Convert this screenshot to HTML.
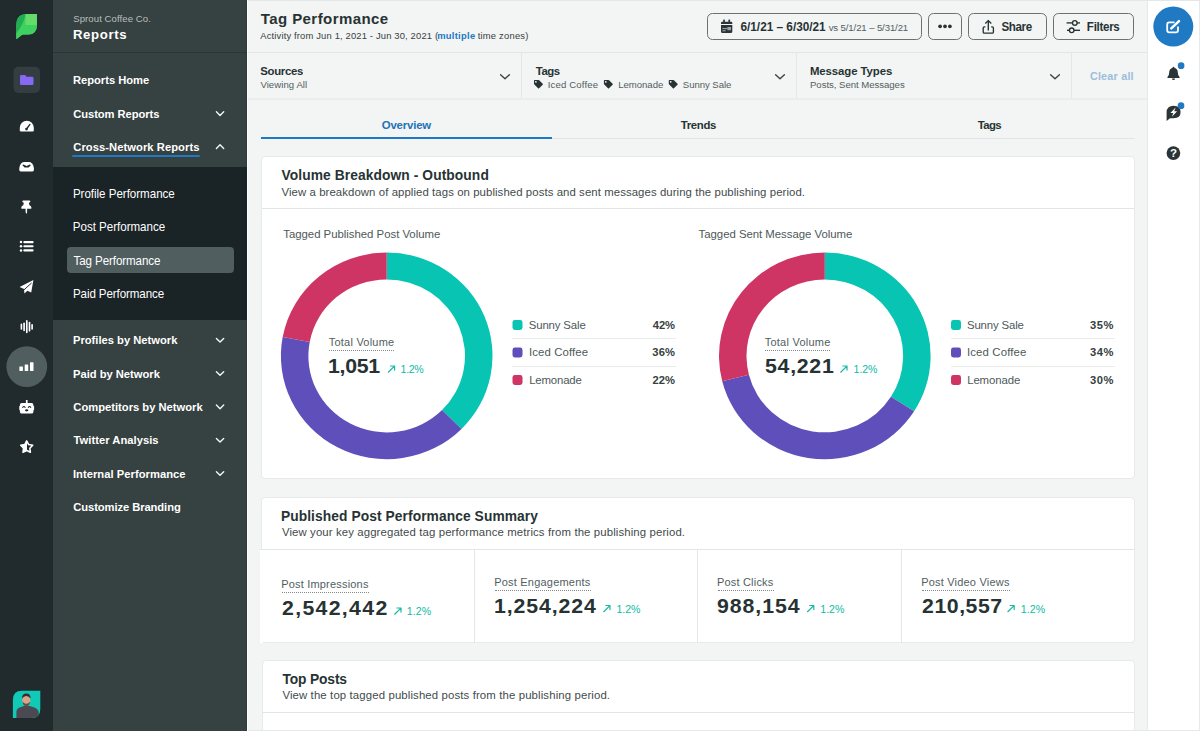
<!DOCTYPE html>
<html lang="en"><head><meta charset="utf-8"><title>Tag Performance - Sprout Reports</title>
<style>
html,body{margin:0;padding:0}
body{width:1200px;height:731px;overflow:hidden;position:relative;background:#f3f4f4;font-family:"Liberation Sans",sans-serif}
.abs,.t{position:absolute}
.t{white-space:pre;line-height:1;font-family:"Liberation Sans",sans-serif}
#iconbar{left:0;top:0;width:53px;height:731px;background:#212a2c}
#sidebar{left:53px;top:0;width:194px;height:731px;background:#364141;border-right:1.5px solid #303a3b;box-sizing:border-box}
#sbhead{left:53px;top:52px;width:194px;height:1px;background:#2c3637}
#submenu{left:53px;top:167px;width:194px;height:153px;background:#1a2325}
#sel{left:66.5px;top:246.5px;width:167px;height:26.5px;border-radius:4px;background:#515e5f}
#cnu{left:72.3px;top:155px;width:128px;height:2px;background:#2079c3;border-radius:1px}
#sbedge{left:247px;top:0;width:1px;height:731px;background:#fcfdfd}
#rail{left:1146.5px;top:0;width:53.5px;height:731px;background:#fff;border-left:1.5px solid #e6e9e9;border-right:1px solid #e6e9e9;box-sizing:border-box}
.hl{height:1px;background:#e2e5e5}
.vl{width:1px;background:#e4e7e7}
.card{background:#fff;border:1px solid #e8eaea;border-radius:4px;box-sizing:border-box}
.btn{top:13px;height:27px;border:1px solid #687273;border-radius:5.5px;box-sizing:border-box;background:#f3f4f4}
.sw{width:10px;height:10px;border-radius:2.5px}
.dot{height:0;border-top:1.3px dotted #7f8b8b}
svg{position:absolute;overflow:visible}

</style></head>
<body>
<div id="iconbar" class="abs"></div>
<div id="sidebar" class="abs"></div>
<div id="sbhead" class="abs"></div>
<div id="submenu" class="abs"></div>
<div id="sel" class="abs"></div>
<div id="cnu" class="abs"></div>
<div id="sbedge" class="abs"></div>
<div id="rail" class="abs"></div>
<!-- top edge line -->
<div class="abs hl" style="left:248px;top:0;width:952px;background:#e4e7e7"></div>
<div class="abs hl" style="left:248px;top:730px;width:952px;background:#e6e9e9;z-index:5"></div>
<!-- header / filter lines -->
<div class="abs hl" style="left:248px;top:52px;width:899px"></div>
<div class="abs hl" style="left:248px;top:98px;width:899px;height:2px;background:#eaeded"></div>
<div class="abs vl" style="left:521px;top:53px;height:45px"></div>
<div class="abs vl" style="left:796px;top:53px;height:45px"></div>
<div class="abs vl" style="left:1071px;top:53px;height:45px"></div>
<!-- tabs -->
<div class="abs hl" style="left:262px;top:138px;width:873px"></div>
<div class="abs" style="left:261px;top:137px;width:291px;height:2px;background:#2079c3"></div>
<!-- buttons -->
<div class="abs btn" style="left:707px;width:215px"></div>
<div class="abs btn" style="left:928px;width:34px"></div>
<div class="abs btn" style="left:968px;width:78.5px"></div>
<div class="abs btn" style="left:1053px;width:80.5px"></div>
<!-- cards -->
<div class="abs card" style="left:261px;top:156px;width:874px;height:323px"></div>
<div class="abs hl" style="left:262px;top:208px;width:872px"></div>
<div class="abs card" style="left:261px;top:496.5px;width:874px;height:146px"></div>
<div class="abs" style="left:260px;top:549px;width:3px;height:93.5px;background:#fff"></div>
<div class="abs hl" style="left:260px;top:548.5px;width:874px"></div>
<div class="abs vl" style="left:474px;top:549px;height:93px"></div>
<div class="abs vl" style="left:696.5px;top:549px;height:93px"></div>
<div class="abs vl" style="left:900.5px;top:549px;height:93px"></div>
<div class="abs card" style="left:261.5px;top:659.5px;width:873.5px;height:90px"></div>
<div class="abs hl" style="left:262px;top:712px;width:872px"></div>
<!-- dotted underlines -->
<div class="abs dot" style="left:329px;top:349.5px;width:65px"></div>
<div class="abs dot" style="left:765px;top:349.5px;width:65px"></div>
<div class="abs dot" style="left:282px;top:591.5px;width:87px"></div>
<div class="abs dot" style="left:495px;top:589.5px;width:96px"></div>
<div class="abs dot" style="left:717.5px;top:589.5px;width:56px"></div>
<div class="abs dot" style="left:922px;top:589.5px;width:88px"></div>
<!-- legends -->
<div class="abs hl" style="left:512px;top:338px;width:164px;background:#ebeded"></div>
<div class="abs hl" style="left:512px;top:365.5px;width:164px;background:#ebeded"></div>
<div class="abs hl" style="left:950.5px;top:338px;width:164px;background:#ebeded"></div>
<div class="abs hl" style="left:950.5px;top:365.5px;width:164px;background:#ebeded"></div>
<svg width="1200" height="731" viewBox="0 0 1200 731" style="left:0;top:0"><g transform="translate(386.7 355.9) scale(1 0.9765)">
<path d="M0.00 -105.80 A105.8 105.8 0 0 1 74.81 74.81 L55.37 55.37 A78.3 78.3 0 0 0 0.00 -78.30 Z" fill="#08c4b2"/>
<path d="M74.81 74.81 A105.8 105.8 0 0 1 -104.03 -19.28 L-76.99 -14.27 A78.3 78.3 0 0 0 55.37 55.37 Z" fill="#5f4fba"/>
<path d="M-104.03 -19.28 A105.8 105.8 0 0 1 -0.00 -105.80 L-0.00 -78.30 A78.3 78.3 0 0 0 -76.99 -14.27 Z" fill="#cf3564"/>
</g></svg>
<svg width="1200" height="731" viewBox="0 0 1200 731" style="left:0;top:0"><g transform="translate(824.8 355.9) scale(1 0.9765)">
<path d="M0.00 -105.80 A105.8 105.8 0 0 1 89.33 56.69 L66.11 41.96 A78.3 78.3 0 0 0 0.00 -78.30 Z" fill="#08c4b2"/>
<path d="M89.33 56.69 A105.8 105.8 0 0 1 -102.57 25.95 L-75.91 19.21 A78.3 78.3 0 0 0 66.11 41.96 Z" fill="#5f4fba"/>
<path d="M-102.57 25.95 A105.8 105.8 0 0 1 -0.00 -105.80 L-0.00 -78.30 A78.3 78.3 0 0 0 -75.91 19.21 Z" fill="#cf3564"/>
</g></svg>
<svg width="1200" height="731" viewBox="0 0 1200 731" style="left:0;top:0">
<defs>
<clipPath id="leafclip"><path d="M36.9 14 L27.3 14 Q16.3 14 16.3 25 L16.3 39.2 L22.6 34.6 L28.2 34.6 Q36.9 34.6 36.9 25.6 Z"/></clipPath>
<clipPath id="avclip"><path d="M21.9 690.7 H40.3 V709 Q40.3 718 31.3 718 H12.9 V699.7 Q12.9 690.7 21.9 690.7 Z"/></clipPath>
</defs>
<!-- logo -->
<g clip-path="url(#leafclip)">
<rect x="16" y="13" width="22" height="27" fill="#3fd15f"/>
<path d="M16 13 H26 Q24 24 16.3 33 Z" fill="#22ad52"/>
<path d="M25.5 13 H38 V25 H25.5 Z" fill="#63dc6c"/>
<path d="M16 40 L16 33 Q22 29 25.5 25 H38 V35 H22 Z" fill="#3fd15f"/>
</g>
<!-- folder tile -->
<rect x="13.5" y="66.8" width="26.5" height="26.2" rx="5" fill="#343e40"/>
<path d="M20 76.4 Q20 75 21.4 75 H24.6 Q25.3 75 25.7 75.6 L26.5 76.7 H32.1 Q33.5 76.7 33.5 78.1 V83.7 Q33.5 85.1 32.1 85.1 H21.4 Q20 85.1 20 83.7 Z" fill="#8668f4"/>
<!-- gauge -->
<path d="M19.8 130.3 V127.8 A7 7.1 0 0 1 33.8 127.8 V130.3 Q33.8 131.5 32.6 131.5 H21 Q19.8 131.5 19.8 130.3 Z" fill="#fff"/>
<path d="M26.6 129 L29.9 124.4" stroke="#212a2c" stroke-width="1.3" stroke-linecap="round"/>
<circle cx="26.5" cy="129.1" r="1.35" fill="#212a2c"/>
<!-- inbox -->
<path d="M19.3 167.9 Q20.3 162 24.6 162 H28.6 Q32.9 162 33.9 167.9 V170 Q33.9 171.4 32.5 171.4 H20.7 Q19.3 171.4 19.3 170 Z" fill="#fff"/>
<path d="M22.4 165.2 Q23 164.4 23.9 164.7 L26.6 166 L29.3 164.7 Q30.2 164.4 30.8 165.2 L28.6 167.6 H24.6 Z" fill="#212a2c"/>
<!-- pin -->
<path d="M23.2 200.4 H29.5 Q30.3 200.4 30.3 201.2 V201.7 Q30.3 202.5 29.5 202.5 H28.9 L29.3 204.9 Q31.5 206 31.5 208.1 Q31.5 208.8 30.8 208.8 H27.1 V212.2 L26.35 213.9 L25.6 212.2 V208.8 H21.9 Q21.2 208.8 21.2 208.1 Q21.2 206 23.4 204.9 L23.8 202.5 H23.2 Q22.4 202.5 22.4 201.7 V201.2 Q22.4 200.4 23.2 200.4 Z" fill="#fff"/>
<!-- list -->
<g fill="#fff">
<circle cx="21" cy="242.1" r="1.25"/><rect x="23.3" y="241" width="10.3" height="2.2" rx="1"/>
<circle cx="21" cy="246.25" r="1.25"/><rect x="23.3" y="245.15" width="10.3" height="2.2" rx="1"/>
<circle cx="21" cy="250.4" r="1.25"/><rect x="23.3" y="249.3" width="10.3" height="2.2" rx="1"/>
</g>
<!-- plane -->
<path d="M33.4 280 L19.6 286.9 L24 289.1 L24.4 293.5 L27.4 290.7 L31.2 292.4 Z" fill="#fff"/>
<path d="M24.3 289.6 L31.3 283.2" stroke="#212a2c" stroke-width="1" stroke-linecap="round"/>
<!-- wave -->
<g stroke="#fff" stroke-width="1.65" stroke-linecap="round">
<path d="M21.4 324.4 V328.9"/><path d="M24.1 323.2 V330.4"/><path d="M26.8 320.8 V332.5"/><path d="M29.5 322.6 V330.8"/><path d="M32.1 324.8 V328.9"/>
</g>
<!-- active circle + bars -->
<ellipse cx="26.8" cy="366.6" rx="20.4" ry="20.4" fill="#515e5f"/>
<g fill="#fff"><rect x="19.4" y="366.6" width="3.5" height="4.4" rx=".5"/><rect x="24.7" y="364.6" width="3.5" height="6.4" rx=".5"/><rect x="30" y="362.2" width="3.5" height="8.8" rx=".5"/></g>
<!-- bot -->
<g fill="#fff"><rect x="25.9" y="400" width="1.7" height="3.6"/><rect x="19.9" y="403" width="13.5" height="10.6" rx="1.9"/><rect x="19.3" y="406" width="1.4" height="4.2" rx=".6"/><rect x="32.7" y="406" width="1.4" height="4.2" rx=".6"/></g>
<g stroke="#212a2c" stroke-width="1.05" fill="none" stroke-linecap="round"><path d="M22.7 407.4 Q23.9 405.8 25.1 407.4"/><path d="M28.3 407.4 Q29.5 405.8 30.7 407.4"/></g>
<ellipse cx="26.7" cy="410.3" rx="1.7" ry="1.1" fill="#212a2c"/>
<!-- star -->
<clipPath id="starL"><rect x="18" y="438" width="8.9" height="17"/></clipPath>
<path d="M26.70 440.90 L28.64 444.53 L32.69 445.25 L29.84 448.22 L30.40 452.30 L26.70 450.50 L23.00 452.30 L23.56 448.22 L20.71 445.25 L24.76 444.53 Z" fill="#212a2c" stroke="#fff" stroke-width="1.55" stroke-linejoin="round"/>
<path d="M26.70 440.90 L28.64 444.53 L32.69 445.25 L29.84 448.22 L30.40 452.30 L26.70 450.50 L23.00 452.30 L23.56 448.22 L20.71 445.25 L24.76 444.53 Z" fill="#fff" clip-path="url(#starL)"/>
<!-- avatar -->
<g clip-path="url(#avclip)">
<rect x="12" y="690" width="29" height="29" fill="#10c9b6"/>
<path d="M16.4 718.5 V712 Q16.4 708 21 707 L24.5 705.8 H28.5 L33 707 Q38.6 708.5 38.8 713 V718.5 Z" fill="#4b4a52"/>
<ellipse cx="26.3" cy="700.2" rx="4.1" ry="5.2" fill="#d7a48d"/>
<path d="M22 698.5 Q22 693.4 26.3 693.4 Q30.6 693.4 30.6 698.5 Q29 696 26.3 696 Q23.6 696 22 698.5 Z" fill="#3a2c28"/>
<path d="M22.5 701.5 Q23 706 26.3 706 Q29.6 706 30.1 701.5 Q28.5 703.8 26.3 703.8 Q24.1 703.8 22.5 701.5 Z" fill="#6b4a40"/>
</g>
<!-- compose -->
<circle cx="1173.3" cy="26.6" r="20" fill="#2079c3"/>
<path d="M1174.6 22.3 H1169.3 Q1167.2 22.3 1167.2 24.4 V30.3 Q1167.2 32.4 1169.3 32.4 H1175.9 Q1178 32.4 1178 30.3 V26.6" stroke="#fff" stroke-width="1.8" fill="none"/>
<path d="M1171.3 28.4 L1179 21.2" stroke="#fff" stroke-width="2.5" stroke-linecap="round"/>
<!-- bell -->
<path d="M1173.5 66.8 Q1174.4 66.8 1174.4 67.8 Q1177.8 68.7 1177.8 72.6 Q1177.8 75.6 1179.5 77 Q1180 77.6 1179.3 78 H1167.7 Q1167 77.6 1167.5 77 Q1169.2 75.6 1169.2 72.6 Q1169.2 68.7 1172.6 67.8 Q1172.6 66.8 1173.5 66.8 Z" fill="#2b3436"/>
<path d="M1171.9 78.6 H1175.1 Q1175.1 80.1 1173.5 80.1 Q1171.9 80.1 1171.9 78.6 Z" fill="#2b3436"/>
<circle cx="1181.1" cy="65.7" r="3.35" fill="#2079c3"/>
<!-- chat bolt -->
<path d="M1166.6 121 V112.5 Q1166.6 105.8 1173.6 105.8 Q1180.6 105.8 1180.6 112 Q1180.6 118.2 1173.6 118.2 H1170 Z" fill="#2b3436"/>
<path d="M1175.6 107.6 L1170.4 112.9 H1173.3 L1171.9 116.8 L1177.1 111.3 H1174.2 Z" fill="#fff"/>
<circle cx="1181" cy="105.7" r="3.35" fill="#2079c3"/>
<!-- help -->
<circle cx="1173.4" cy="153.05" r="6.85" fill="#2b3436"/>
<text x="1173.45" y="157.1" text-anchor="middle" font-family="Liberation Sans, sans-serif" font-size="11.5" font-weight="700" fill="#fff">?</text>
<!-- calendar -->
<g fill="#2b3436"><rect x="723.2" y="19.6" width="1.7" height="3"/><rect x="728.4" y="19.6" width="1.7" height="3"/><path d="M721 22.8 Q721 21.7 722.1 21.7 H731.2 Q732.3 21.7 732.3 22.8 V24 H721 Z"/><path d="M721 25.1 H732.3 V31.8 Q732.3 32.9 731.2 32.9 H722.1 Q721 32.9 721 31.8 Z"/></g>
<g fill="#9aa4a4"><rect x="722.4" y="28" width="5" height="1.1"/><rect x="722.4" y="30.2" width="3.2" height="1.1"/><rect x="727.4" y="27" width="3.6" height="3.2"/></g>
<!-- dots -->
<g fill="#273333"><circle cx="940.1" cy="26.3" r="1.85"/><circle cx="945" cy="26.3" r="1.85"/><circle cx="949.9" cy="26.3" r="1.85"/></g>
<!-- share -->
<g stroke="#273333" stroke-width="1.35" fill="none"><path d="M985.4 26.9 H984.4 Q983.2 26.9 983.2 28.1 V31.9 Q983.2 33.1 984.4 33.1 H992.2 Q993.4 33.1 993.4 31.9 V28.1 Q993.4 26.9 992.2 26.9 H991.2"/><path d="M988.3 30.6 V20.8"/><path d="M985.3 23.6 L988.3 20.6 L991.3 23.6"/></g>
<!-- filters -->
<g stroke="#273333" stroke-width="1.35" fill="#f3f4f4"><path d="M1066.6 22.9 H1080"/><circle cx="1074.8" cy="22.9" r="2.3"/><path d="M1067 30.3 H1080"/><circle cx="1071.7" cy="30.3" r="2.3"/></g>
<!-- chevrons main -->
<g stroke="#364141" stroke-width="1.35" fill="none" stroke-linecap="round" stroke-linejoin="round">
<path d="M500.6 74.7 L505 78.8 L509.4 74.7"/><path d="M775.6 74.7 L780 78.8 L784.4 74.7"/><path d="M1050.6 74.7 L1055 78.8 L1059.4 74.7"/>
</g>
<!-- chevrons sidebar -->
<g stroke="#f4f6f6" stroke-width="1.4" fill="none" stroke-linecap="round" stroke-linejoin="round">
<path d="M216.4 111.8 L220.05 115.4 L223.7 111.8"/>
<path d="M216.4 148.4 L220.05 144.8 L223.7 148.4"/>
<path d="M216.4 338.4 L220.05 342.0 L223.7 338.4"/>
<path d="M216.4 371.7 L220.05 375.3 L223.7 371.7"/>
<path d="M216.4 405.1 L220.05 408.7 L223.7 405.1"/>
<path d="M216.4 438.4 L220.05 442.0 L223.7 438.4"/>
<path d="M216.4 471.7 L220.05 475.3 L223.7 471.7"/>
</g>
<!-- tag icons -->
<g fill="#273333" id="tags">
<path id="tg" d="M534 80.6 Q534 79.9 534.7 79.9 H538.3 Q538.8 79.9 539.2 80.3 L542.7 83.7 Q543.2 84.2 542.7 84.7 L539.1 88.2 Q538.6 88.7 538.1 88.2 L534.4 84.6 Q534 84.2 534 83.7 Z M535.9 80.9 A.9 .9 0 1 0 535.9 82.7 A.9 .9 0 1 0 535.9 80.9 Z" fill-rule="evenodd"/>
<use href="#tg" x="69.9"/><use href="#tg" x="134.8"/>
</g>
<!-- legend swatches -->
<rect x="512.5" y="320" width="10" height="9.9" rx="2.4" fill="#08c4b2"/><rect x="512.5" y="347.5" width="10" height="9.9" rx="2.4" fill="#5f4fba"/><rect x="512.5" y="375" width="10" height="9.9" rx="2.4" fill="#cf3564"/><rect x="951" y="320" width="10" height="9.9" rx="2.4" fill="#08c4b2"/><rect x="951" y="347.5" width="10" height="9.9" rx="2.4" fill="#5f4fba"/><rect x="951" y="375" width="10" height="9.9" rx="2.4" fill="#cf3564"/>
<!-- up-right arrows -->
<g stroke="#14b99f" stroke-width="1.2" fill="none" stroke-linecap="round" stroke-linejoin="round">
<path id="ar" d="M388.3 372.2 L394.5 366.1 M390.5 366 H394.6 V370.1"/>
<use href="#ar" x="452.4"/>
<use href="#ar" x="6.4" y="242"/>
<use href="#ar" x="215.4" y="239.5"/>
<use href="#ar" x="419.2" y="239.5"/>
<use href="#ar" x="619.6" y="239.5"/>
</g>
</svg>


<div id="labels">
<span class="t" style="left:73.20px;top:14.00px;font-size:9.6px;font-weight:400;color:#b7bfbf;letter-spacing:0.068px">Sprout Coffee Co.</span>
<span class="t" style="left:72.97px;top:28.00px;font-size:13.2px;font-weight:700;color:#ffffff;letter-spacing:0.631px">Reports</span>
<span class="t" style="left:72.96px;top:75.00px;font-size:11.2px;font-weight:700;color:#ffffff;letter-spacing:-0.013px;transform:scale(1.000,1.030);transform-origin:0 9.00px">Reports Home</span>
<span class="t" style="left:73.24px;top:109.00px;font-size:11.2px;font-weight:700;color:#ffffff;letter-spacing:-0.068px;transform:scale(1.000,1.030);transform-origin:0 9.00px">Custom Reports</span>
<span class="t" style="left:73.30px;top:142.00px;font-size:11.2px;font-weight:700;color:#ffffff;letter-spacing:0.058px;transform:scale(1.000,1.030);transform-origin:0 9.00px">Cross-Network Reports</span>
<span class="t" style="left:72.88px;top:188.00px;font-size:11.6px;font-weight:400;color:#ffffff;letter-spacing:-0.030px;transform:scale(1.000,1.030);transform-origin:0 10.00px">Profile Performance</span>
<span class="t" style="left:72.87px;top:221.00px;font-size:11.6px;font-weight:400;color:#ffffff;letter-spacing:-0.034px;transform:scale(1.000,1.030);transform-origin:0 10.00px">Post Performance</span>
<span class="t" style="left:73.55px;top:255.00px;font-size:11.6px;font-weight:400;color:#ffffff;letter-spacing:-0.099px;transform:scale(1.000,1.030);transform-origin:0 10.00px">Tag Performance</span>
<span class="t" style="left:72.93px;top:288.00px;font-size:11.6px;font-weight:400;color:#ffffff;letter-spacing:-0.101px;transform:scale(1.000,1.030);transform-origin:0 10.00px">Paid Performance</span>
<span class="t" style="left:72.98px;top:335.00px;font-size:11.2px;font-weight:700;color:#ffffff;letter-spacing:-0.003px;transform:scale(1.000,1.030);transform-origin:0 9.00px">Profiles by Network</span>
<span class="t" style="left:72.99px;top:369.00px;font-size:11.2px;font-weight:700;color:#ffffff;letter-spacing:-0.011px;transform:scale(1.000,1.030);transform-origin:0 9.00px">Paid by Network</span>
<span class="t" style="left:73.33px;top:402.00px;font-size:11.2px;font-weight:700;color:#ffffff;letter-spacing:0.001px;transform:scale(1.000,1.030);transform-origin:0 9.00px">Competitors by Network</span>
<span class="t" style="left:73.53px;top:435.00px;font-size:11.2px;font-weight:700;color:#ffffff;letter-spacing:0.034px;transform:scale(1.000,1.030);transform-origin:0 9.00px">Twitter Analysis</span>
<span class="t" style="left:72.98px;top:469.00px;font-size:11.2px;font-weight:700;color:#ffffff;letter-spacing:0.032px;transform:scale(1.000,1.030);transform-origin:0 9.00px">Internal Performance</span>
<span class="t" style="left:73.29px;top:502.00px;font-size:11.2px;font-weight:700;color:#ffffff;letter-spacing:-0.078px;transform:scale(1.000,1.030);transform-origin:0 9.00px">Customize Branding</span>
<span class="t" style="left:260.67px;top:11.00px;font-size:15px;font-weight:700;color:#273333;letter-spacing:0.438px">Tag Performance</span>
<span class="t" style="left:260.28px;top:31.00px;font-size:9.4px;font-weight:400;color:#364141;letter-spacing:0.167px;transform:scale(1.000,1.030);transform-origin:0 8.00px">Activity from Jun 1, 2021 - Jun 30, 2021 (</span>
<span class="t" style="left:437.13px;top:31.00px;font-size:9.4px;font-weight:700;color:#2079c3;letter-spacing:0.300px;transform:scale(1.000,1.030);transform-origin:0 8.00px">multiple</span>
<span class="t" style="left:477.70px;top:31.00px;font-size:9.4px;font-weight:400;color:#364141;letter-spacing:0.223px;transform:scale(1.000,1.030);transform-origin:0 8.00px">time zones)</span>
<span class="t" style="left:740.49px;top:22.00px;font-size:11.8px;font-weight:700;color:#273333;letter-spacing:-0.005px;transform:scale(1.000,1.030);transform-origin:0 9.00px">6/1/21 – 6/30/21</span>
<span class="t" style="left:828.69px;top:23.00px;font-size:9.6px;font-weight:400;color:#515e5f;letter-spacing:-0.116px;transform:scale(1.000,1.030);transform-origin:0 8.00px">vs 5/1/21 – 5/31/21</span>
<span class="t" style="left:1001.46px;top:21.00px;font-size:11.6px;font-weight:700;color:#273333;letter-spacing:-0.369px;transform:scale(1.000,1.030);transform-origin:0 10.00px">Share</span>
<span class="t" style="left:1086.87px;top:21.00px;font-size:11.6px;font-weight:700;color:#273333;letter-spacing:-0.310px;transform:scale(1.000,1.030);transform-origin:0 10.00px">Filters</span>
<span class="t" style="left:260.30px;top:66.00px;font-size:11.4px;font-weight:700;color:#273333;letter-spacing:-0.324px;transform:scale(1.000,1.030);transform-origin:0 9.00px">Sources</span>
<span class="t" style="left:260.42px;top:80.00px;font-size:9.6px;font-weight:400;color:#515e5f;letter-spacing:0.055px;transform:scale(1.000,1.030);transform-origin:0 8.00px">Viewing All</span>
<span class="t" style="left:535.82px;top:66.00px;font-size:11.4px;font-weight:700;color:#273333;letter-spacing:-0.490px;transform:scale(1.000,1.030);transform-origin:0 9.00px">Tags</span>
<span class="t" style="left:547.73px;top:80.00px;font-size:9.6px;font-weight:400;color:#515e5f;letter-spacing:0.152px;transform:scale(1.000,1.030);transform-origin:0 8.00px">Iced Coffee</span>
<span class="t" style="left:618.19px;top:80.00px;font-size:9.6px;font-weight:400;color:#515e5f;letter-spacing:-0.031px;transform:scale(1.000,1.030);transform-origin:0 8.00px">Lemonade</span>
<span class="t" style="left:682.85px;top:80.00px;font-size:9.6px;font-weight:400;color:#515e5f;letter-spacing:-0.060px;transform:scale(1.000,1.030);transform-origin:0 8.00px">Sunny Sale</span>
<span class="t" style="left:809.89px;top:66.00px;font-size:11.4px;font-weight:700;color:#273333;letter-spacing:-0.078px;transform:scale(1.000,1.030);transform-origin:0 9.00px">Message Types</span>
<span class="t" style="left:810.01px;top:80.00px;font-size:9.6px;font-weight:400;color:#515e5f;letter-spacing:-0.040px;transform:scale(1.000,1.030);transform-origin:0 8.00px">Posts, Sent Messages</span>
<span class="t" style="left:1089.89px;top:71.00px;font-size:10.8px;font-weight:700;color:#9bbedd;letter-spacing:0.217px;transform:scale(1.000,1.030);transform-origin:0 9.00px">Clear all</span>
<span class="t" style="left:381.74px;top:120.00px;font-size:11.4px;font-weight:700;color:#2173b8;letter-spacing:-0.175px;transform:scale(1.000,1.030);transform-origin:0 9.00px">Overview</span>
<span class="t" style="left:680.67px;top:120.00px;font-size:11.4px;font-weight:700;color:#273333;letter-spacing:-0.317px;transform:scale(1.000,1.030);transform-origin:0 9.00px">Trends</span>
<span class="t" style="left:977.71px;top:120.00px;font-size:11.4px;font-weight:700;color:#273333;letter-spacing:-0.603px;transform:scale(1.000,1.030);transform-origin:0 9.00px">Tags</span>
<span class="t" style="left:281.53px;top:169.00px;font-size:13.8px;font-weight:700;color:#273333;letter-spacing:0.082px;transform:scale(1.000,1.030);transform-origin:0 11.00px">Volume Breakdown - Outbound</span>
<span class="t" style="left:281.52px;top:187.00px;font-size:11.4px;font-weight:400;color:#3f4b4c;letter-spacing:0.071px;transform:scale(1.000,1.030);transform-origin:0 9.00px">View a breakdown of applied tags on published posts and sent messages during the publishing period.</span>
<span class="t" style="left:283.24px;top:229.00px;font-size:11.4px;font-weight:400;color:#4d595a;letter-spacing:-0.023px;transform:scale(1.000,1.030);transform-origin:0 9.00px">Tagged Published Post Volume</span>
<span class="t" style="left:698.62px;top:229.00px;font-size:11.4px;font-weight:400;color:#4d595a;letter-spacing:-0.034px;transform:scale(1.000,1.030);transform-origin:0 9.00px">Tagged Sent Message Volume</span>
<span class="t" style="left:328.77px;top:337.00px;font-size:11.0px;font-weight:400;color:#515e5f;letter-spacing:0.220px;transform:scale(1.000,1.030);transform-origin:0 9.00px">Total Volume</span>
<span class="t" style="left:327.80px;top:358.00px;font-size:18.2px;font-weight:700;color:#273333;letter-spacing:-0.234px;transform:scale(1.170,1.070);transform-origin:0 15.00px">1,051</span>
<span class="t" style="left:400.59px;top:364.00px;font-size:10.6px;font-weight:400;color:#0cbba5;letter-spacing:-0.314px;transform:scale(1.000,1.030);transform-origin:0 9.00px">1.2%</span>
<span class="t" style="left:764.65px;top:337.00px;font-size:11.0px;font-weight:400;color:#515e5f;letter-spacing:0.245px;transform:scale(1.000,1.030);transform-origin:0 9.00px">Total Volume</span>
<span class="t" style="left:764.56px;top:358.00px;font-size:18.2px;font-weight:700;color:#273333;letter-spacing:0.624px;transform:scale(1.170,1.070);transform-origin:0 15.00px">54,221</span>
<span class="t" style="left:853.59px;top:364.00px;font-size:10.6px;font-weight:400;color:#0cbba5;letter-spacing:-0.081px;transform:scale(1.000,1.030);transform-origin:0 9.00px">1.2%</span>
<span class="t" style="left:528.79px;top:320.00px;font-size:11.4px;font-weight:400;color:#4d595a;letter-spacing:-0.146px;transform:scale(1.000,1.030);transform-origin:0 9.00px">Sunny Sale</span>
<span class="t" style="left:652.66px;top:320.00px;font-size:11.2px;font-weight:700;color:#364141;letter-spacing:0.002px;transform:scale(1.000,1.030);transform-origin:0 9.00px">42%</span>
<span class="t" style="left:528.96px;top:347.00px;font-size:11.4px;font-weight:400;color:#4d595a;letter-spacing:0.099px;transform:scale(1.000,1.030);transform-origin:0 9.00px">Iced Coffee</span>
<span class="t" style="left:652.25px;top:347.00px;font-size:11.2px;font-weight:700;color:#364141;letter-spacing:0.209px;transform:scale(1.000,1.030);transform-origin:0 9.00px">36%</span>
<span class="t" style="left:529.20px;top:375.00px;font-size:11.4px;font-weight:400;color:#4d595a;letter-spacing:-0.166px;transform:scale(1.000,1.030);transform-origin:0 9.00px">Lemonade</span>
<span class="t" style="left:652.45px;top:375.00px;font-size:11.2px;font-weight:700;color:#364141;letter-spacing:0.107px;transform:scale(1.000,1.030);transform-origin:0 9.00px">22%</span>
<span class="t" style="left:966.96px;top:320.00px;font-size:11.4px;font-weight:400;color:#4d595a;letter-spacing:-0.152px;transform:scale(1.000,1.030);transform-origin:0 9.00px">Sunny Sale</span>
<span class="t" style="left:1090.11px;top:320.00px;font-size:11.2px;font-weight:700;color:#364141;letter-spacing:0.500px;transform:scale(1.000,1.030);transform-origin:0 9.00px">35%</span>
<span class="t" style="left:966.92px;top:347.00px;font-size:11.4px;font-weight:400;color:#4d595a;letter-spacing:0.144px;transform:scale(1.000,1.030);transform-origin:0 9.00px">Iced Coffee</span>
<span class="t" style="left:1090.11px;top:347.00px;font-size:11.2px;font-weight:700;color:#364141;letter-spacing:0.500px;transform:scale(1.000,1.030);transform-origin:0 9.00px">34%</span>
<span class="t" style="left:967.17px;top:375.00px;font-size:11.4px;font-weight:400;color:#4d595a;letter-spacing:-0.107px;transform:scale(1.000,1.030);transform-origin:0 9.00px">Lemonade</span>
<span class="t" style="left:1090.11px;top:375.00px;font-size:11.2px;font-weight:700;color:#364141;letter-spacing:0.500px;transform:scale(1.000,1.030);transform-origin:0 9.00px">30%</span>
<span class="t" style="left:280.95px;top:510.00px;font-size:13.8px;font-weight:700;color:#273333;letter-spacing:0.074px;transform:scale(1.000,1.030);transform-origin:0 11.00px">Published Post Performance Summary</span>
<span class="t" style="left:281.89px;top:527.00px;font-size:11.4px;font-weight:400;color:#3f4b4c;letter-spacing:0.110px;transform:scale(1.000,1.030);transform-origin:0 9.00px">View your key aggregated tag performance metrics from the publishing period.</span>
<span class="t" style="left:281.18px;top:579.00px;font-size:11.0px;font-weight:400;color:#515e5f;letter-spacing:0.190px;transform:scale(1.000,1.030);transform-origin:0 9.00px">Post Impressions</span>
<span class="t" style="left:281.96px;top:600.00px;font-size:18.2px;font-weight:700;color:#273333;letter-spacing:1.129px;transform:scale(1.170,1.070);transform-origin:0 15.00px">2,542,442</span>
<span class="t" style="left:406.75px;top:606.00px;font-size:10.6px;font-weight:400;color:#0cbba5;letter-spacing:0.125px;transform:scale(1.000,1.030);transform-origin:0 9.00px">1.2%</span>
<span class="t" style="left:494.18px;top:577.00px;font-size:11.0px;font-weight:400;color:#515e5f;letter-spacing:0.208px;transform:scale(1.000,1.030);transform-origin:0 9.00px">Post Engagements</span>
<span class="t" style="left:493.50px;top:598.00px;font-size:18.2px;font-weight:700;color:#273333;letter-spacing:0.757px;transform:scale(1.170,1.070);transform-origin:0 15.00px">1,254,224</span>
<span class="t" style="left:616.59px;top:604.00px;font-size:10.6px;font-weight:400;color:#0cbba5;letter-spacing:-0.123px;transform:scale(1.000,1.030);transform-origin:0 9.00px">1.2%</span>
<span class="t" style="left:717.00px;top:577.00px;font-size:11.0px;font-weight:400;color:#515e5f;letter-spacing:0.185px;transform:scale(1.000,1.030);transform-origin:0 9.00px">Post Clicks</span>
<span class="t" style="left:716.68px;top:598.00px;font-size:18.2px;font-weight:700;color:#273333;letter-spacing:0.816px;transform:scale(1.170,1.070);transform-origin:0 15.00px">988,154</span>
<span class="t" style="left:820.27px;top:604.00px;font-size:10.6px;font-weight:400;color:#0cbba5;letter-spacing:-0.008px;transform:scale(1.000,1.030);transform-origin:0 9.00px">1.2%</span>
<span class="t" style="left:921.18px;top:577.00px;font-size:11.0px;font-weight:400;color:#515e5f;letter-spacing:0.201px;transform:scale(1.000,1.030);transform-origin:0 9.00px">Post Video Views</span>
<span class="t" style="left:921.96px;top:598.00px;font-size:18.2px;font-weight:700;color:#273333;letter-spacing:0.464px;transform:scale(1.170,1.070);transform-origin:0 15.00px">210,557</span>
<span class="t" style="left:1020.75px;top:604.00px;font-size:10.6px;font-weight:400;color:#0cbba5;letter-spacing:0.125px;transform:scale(1.000,1.030);transform-origin:0 9.00px">1.2%</span>
<span class="t" style="left:282.43px;top:673.00px;font-size:13.8px;font-weight:700;color:#273333;letter-spacing:-0.131px;transform:scale(1.000,1.030);transform-origin:0 11.00px">Top Posts</span>
<span class="t" style="left:282.38px;top:690.00px;font-size:11.4px;font-weight:400;color:#3f4b4c;letter-spacing:0.120px;transform:scale(1.000,1.030);transform-origin:0 9.00px">View the top tagged published posts from the publishing period.</span>
</div>
</body></html>
